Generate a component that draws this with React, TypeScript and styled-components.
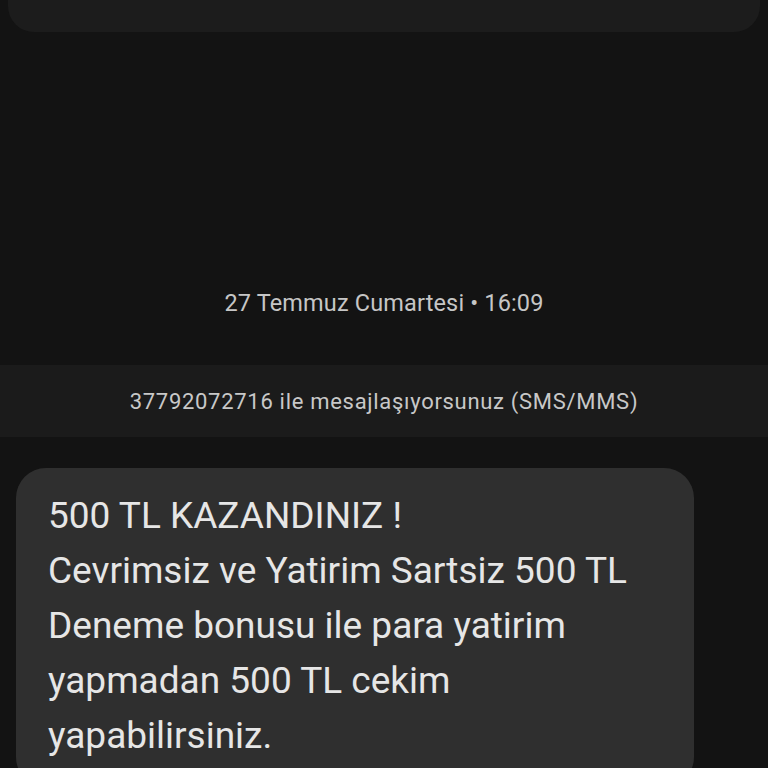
import React from "react";
import styled, { createGlobalStyle } from "styled-components";

const Global = createGlobalStyle`
  html, body { margin: 0; padding: 0; background: #131313; }
  body { font-family: Roboto, "Noto Sans", sans-serif; overflow: hidden; }
`;

const Screen = styled.div`
  width: 768px;
  height: 768px;
  overflow: hidden;
  background: #131313;
  display: flex;
  flex-direction: column;
`;

const TopCard = styled.div`
  height: 32px;
  margin: 0 8px;
  background: #1c1c1c;
  border-radius: 0 0 26px 26px;
  flex-shrink: 0;
`;

const DateLabel = styled.div`
  margin-top: 257px;
  text-align: center;
  font-size: 23.5px;
  line-height: 28px;
  color: #c6c6c6;
  letter-spacing: 0.15px;
`;

const Banner = styled.div`
  margin-top: 48px;
  height: 72px;
  flex-shrink: 0;
  background: #1b1b1b;
  display: flex;
  align-items: center;
  justify-content: center;
  font-size: 22px;
  letter-spacing: 0.7px;
  color: #c8c8c8;
`;

const Bubble = styled.div`
  margin: 31px 0 0 16px;
  width: 678px;
  box-sizing: border-box;
  padding: 20px 24px 24px 32px;
  background: #2f2f2f;
  border-radius: 30px;
  color: #e6e6e6;
  font-size: 37px;
  line-height: 55px;
  flex-shrink: 0;
`;

const Line = styled.div`
  white-space: nowrap;
`;

const lines = [
  "500 TL KAZANDINIZ !",
  "Cevrimsiz ve Yatirim Sartsiz 500 TL",
  "Deneme bonusu ile para yatirim",
  "yapmadan 500 TL cekim",
  "yapabilirsiniz.",
];

export default function App() {
  return (
    <Screen>
      <Global />
      <TopCard />
      <DateLabel>27 Temmuz Cumartesi • 16:09</DateLabel>
      <Banner>37792072716 ile mesajlaşıyorsunuz (SMS/MMS)</Banner>
      <Bubble>
        {lines.map((l) => (
          <Line key={l}>{l}</Line>
        ))}
      </Bubble>
    </Screen>
  );
}
